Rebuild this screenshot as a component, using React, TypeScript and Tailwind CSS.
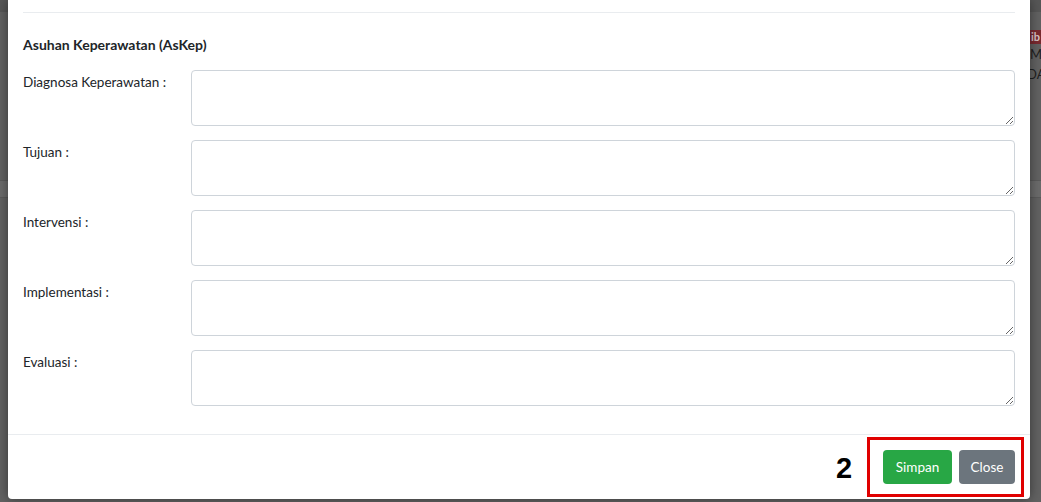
const fields = ["Diagnosa Keperawatan :", "Tujuan :", "Intervensi :", "Implementasi :", "Evaluasi :"];

export default function App() {
  return (
    <div className="relative w-[1041px] h-[502px] overflow-hidden bg-[#626262] font-['Lato',sans-serif]">
      {/* dimmed page behind the modal */}
      <div className="flex flex-col">
        <div className="h-[12px] bg-[#575757]" />
        <div className="flex justify-end pt-[18px]">
          <div className="flex flex-col items-start w-[11px] text-[13px] leading-[20px] text-[#1f1f1f] overflow-hidden">
            <span className="bg-[#7a2a30] text-[#d9c7c9] text-[11px] font-bold leading-[14px] px-[1px]">ib</span>
            <span>M</span>
            <span className="-ml-[3px]">DA</span>
          </div>
        </div>
        <div className="h-[96px]" />
        <div className="h-[18px] bg-[#6b6b6b] border-y border-[#5a5a5a]" />
      </div>

      {/* modal */}
      <div className="absolute left-[8px] top-0 w-[1022px] h-[499px] bg-white rounded-b-[4px] shadow-[0_0_12px_rgba(0,0,0,0.45)] flex flex-col">
        <div className="px-[15px] h-[434px]">
          <div className="mt-[12px] border-t border-[#e9ecef]" />
          <h5 className="mt-[22px] text-[14px] leading-[20px] font-bold text-[#212529]">Asuhan Keperawatan (AsKep)</h5>
          <div className="mt-[15px] flex flex-col gap-[14px]">
            {fields.map((f) => (
              <div key={f} className="flex">
                <label className="w-[168px] shrink-0 pt-[2px] text-[13.5px] leading-[20px] text-[#212529]">{f}</label>
                <textarea className="flex-1 h-[56px] border border-[#ced4da] rounded-[4px] px-3 py-1.5 text-[13px] outline-none" />
              </div>
            ))}
          </div>
        </div>
        <div className="border-t border-[#e9ecef] flex-1 flex items-center justify-end gap-[7px] pr-[15px]">
          <button className="h-[34px] w-[69px] rounded-[4px] bg-[#28a745] text-white text-[13.5px]">Simpan</button>
          <button className="h-[34px] w-[56px] rounded-[4px] bg-[#6c757d] text-white text-[13.5px]">Close</button>
        </div>
      </div>

      {/* annotation */}
      <div className="absolute left-[867px] top-[437px] w-[157px] h-[60px] border-[3px] border-[#e00000]" />
      <span className="absolute left-[836px] top-[451px] text-[29px] leading-[34px] font-bold text-black font-['Liberation_Sans',sans-serif]">2</span>
    </div>
  );
}
